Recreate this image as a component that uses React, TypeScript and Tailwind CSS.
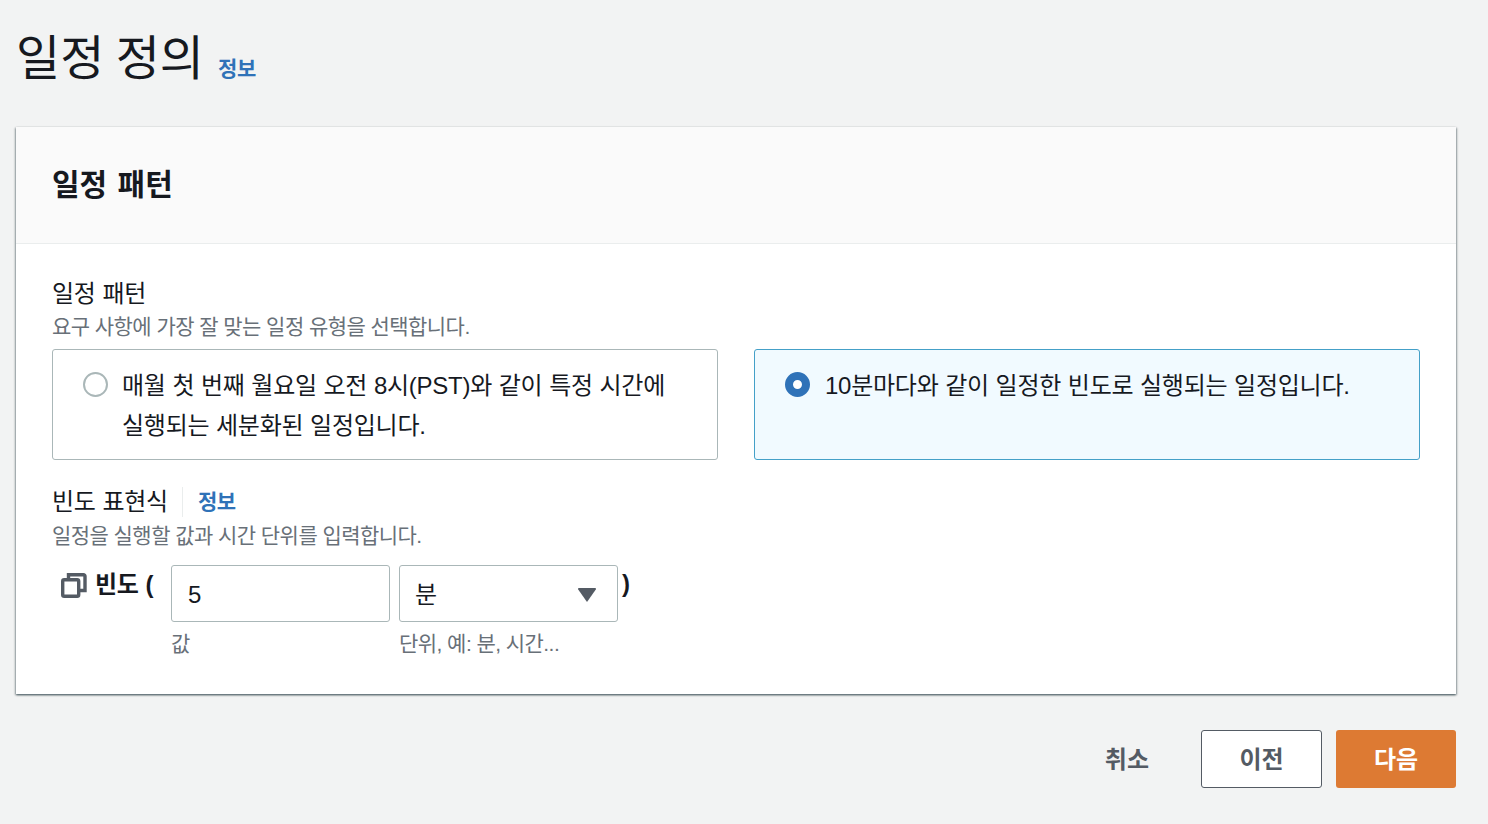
const font = "font-['Liberation_Sans','Noto_Sans_CJK_KR',sans-serif]";
const body = "text-[24px] tracking-[-0.25px] [word-spacing:0.3px] text-[#16191f]";
const hint = "text-[21px] tracking-[-0.55px] text-[#687078]";
const info = "text-[21px] font-bold leading-[32px] tracking-[-0.4px] text-[#2f72b8]";

function RadioCard({ selected, lines }: { selected?: boolean; lines: string[] }) {
  return (
    <div
      className={
        selected
          ? "flex h-[111px] items-start gap-[15px] rounded-[3px] border border-[#44a0c8] bg-[#f1faff] pl-[30px] pt-[16px]"
          : "flex h-[111px] items-start gap-[14px] rounded-[3px] border border-[#aab7b8] bg-white pl-[30px] pt-[16px]"
      }
    >
      {selected ? (
        <span className="mt-[6px] h-[25px] w-[25px] shrink-0 rounded-full border-[8px] border-[#2f72b8] bg-white" />
      ) : (
        <span className="mt-[6px] h-[25px] w-[25px] shrink-0 rounded-full border-2 border-[#aab7b8] bg-white" />
      )}
      <div className={`${body} leading-[40px]`}>
        {lines.map((line) => (
          <div key={line}>{line}</div>
        ))}
      </div>
    </div>
  );
}

export default function App() {
  return (
    <div className={`${font} h-[824px] w-[1488px] overflow-hidden bg-[#f2f3f3] px-4`}>
      <div className="flex h-[127px] items-start pt-[29px]">
        <h1 className="text-[48px] font-normal leading-[60px] [word-spacing:-2px] text-[#16191f]">일정 정의</h1>
        <a className={`ml-[14px] mt-[24px] ${info}`}>정보</a>
      </div>

      <section className="h-[567px] w-[1440px] bg-white shadow-[0_1px_2px_0_rgba(0,28,36,0.5),1px_1px_2px_0_rgba(0,28,36,0.25),-1px_1px_2px_0_rgba(0,28,36,0.25)]">
        <div className="flex h-[117px] items-start border-b border-[#eaeded] bg-[#fafafa] px-9 pt-[38px]">
          <h2 className="text-[30px] font-bold leading-[40px] [word-spacing:2px] text-[#16191f]">일정 패턴</h2>
        </div>

        <div className="px-9 pt-[32px]">
          <div className={`${body} leading-[36px]`}>일정 패턴</div>
          <div className={`${hint} leading-[30px]`}>요구 사항에 가장 잘 맞는 일정 유형을 선택합니다.</div>

          <div className="mt-[7px] grid grid-cols-2 gap-9">
            <RadioCard lines={["매월 첫 번째 월요일 오전 8시(PST)와 같이 특정 시간에", "실행되는 세분화된 일정입니다."]} />
            <RadioCard selected lines={["10분마다와 같이 일정한 빈도로 실행되는 일정입니다."]} />
          </div>

          <div className="mt-[26px] flex items-center">
            <span className={`${body} leading-[32px]`}>빈도 표현식</span>
            <span className="ml-[14px] h-[30px] w-px bg-[#eaeded]" />
            <a className={`ml-[15px] ${info}`}>정보</a>
          </div>
          <div className={`mt-[3px] ${hint} leading-[30px]`}>일정을 실행할 값과 시간 단위를 입력합니다.</div>

          <div className="mt-[14px] flex items-start">
            <div className="flex w-[119px] items-center pl-[9px] pt-[2px]">
              <svg viewBox="0 0 26 26" className="h-[26px] w-[26px] shrink-0" fill="none" stroke="#545b64" strokeWidth="3.4">
                <rect x="1.7" y="7.7" width="16" height="16.6" rx="1.5" />
                <path d="M7.5 7V2.7h15a1.5 1.5 0 0 1 1.5 1.5v14.3h-6" />
              </svg>
              <span className={`ml-[8px] whitespace-nowrap font-bold ${body} leading-[36px]`}>빈도 (</span>
            </div>
            <div className="w-[219px]">
              <div className={`flex h-[57px] items-center rounded-[3px] border border-[#aab7b8] bg-white pl-[16px] pt-[2px] ${body}`}>5</div>
              <div className={`mt-[6px] ${hint} leading-[32px]`}>값</div>
            </div>
            <div className="ml-[9px] w-[219px]">
              <div className={`flex h-[57px] items-center justify-between rounded-[3px] border border-[#aab7b8] bg-white pl-[15px] pr-[21px] pt-[2px] ${body}`}>
                <span>분</span>
                <svg viewBox="0 0 18 15" className="h-[15px] w-[18px]">
                  <path d="M1 1h16a1 1 0 0 1 .8 1.5L9 15 .2 2.5A1 1 0 0 1 1 1z" fill="#545b64" />
                </svg>
              </div>
              <div className={`mt-[6px] ${hint} leading-[32px]`}>단위, 예: 분, 시간...</div>
            </div>
            <span className="ml-[4px] pt-[1px] text-[24px] font-bold leading-[36px] text-[#16191f]">)</span>
          </div>
        </div>
      </section>

      <div className="mt-[36px] flex w-[1440px] items-center justify-end">
        <span className="mr-[52px] pt-[1px] text-[24px] font-bold text-[#545b64]">취소</span>
        <button className="h-[58px] w-[121px] rounded-[3px] border border-[#545b64] bg-white pt-[1px] text-[24px] font-bold text-[#545b64]">이전</button>
        <button className="ml-[14px] h-[58px] w-[120px] rounded-[3px] bg-[#dd7a33] pt-[1px] text-[24px] font-bold text-white">다음</button>
      </div>
    </div>
  );
}
